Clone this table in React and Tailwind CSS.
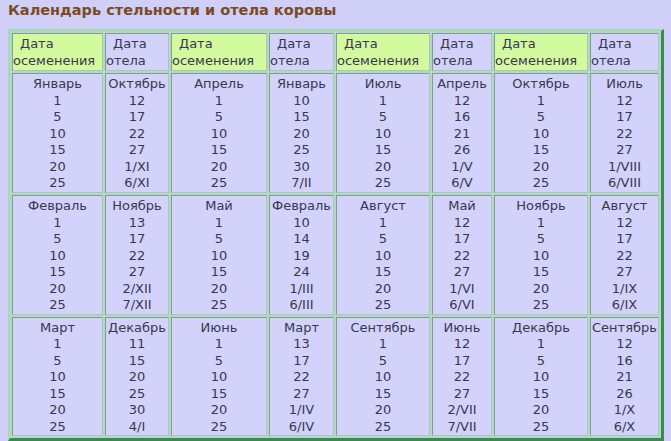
import React from "react";

const widths = ["w-[91px]", "w-[64px]", "w-[96px]", "w-[65px]", "w-[94px]", "w-[60px]", "w-[94px]", "w-[69px]"];

const rows = [
  {
    h: "h-[120px]",
    cols: [
      ["Январь", "1", "5", "10", "15", "20", "25"],
      ["Октябрь", "12", "17", "22", "27", "1/XI", "6/XI"],
      ["Апрель", "1", "5", "10", "15", "20", "25"],
      ["Январь", "10", "15", "20", "25", "30", "7/II"],
      ["Июль", "1", "5", "10", "15", "20", "25"],
      ["Апрель", "12", "16", "21", "26", "1/V", "6/V"],
      ["Октябрь", "1", "5", "10", "15", "20", "25"],
      ["Июль", "12", "17", "22", "27", "1/VIII", "6/VIII"],
    ],
  },
  {
    h: "h-[118px]",
    cols: [
      ["Февраль", "1", "5", "10", "15", "20", "25"],
      ["Ноябрь", "13", "17", "22", "27", "2/XII", "7/XII"],
      ["Май", "1", "5", "10", "15", "20", "25"],
      ["Февраль", "10", "14", "19", "24", "1/III", "6/III"],
      ["Август", "1", "5", "10", "15", "20", "25"],
      ["Май", "12", "17", "22", "27", "1/VI", "6/VI"],
      ["Ноябрь", "1", "5", "10", "15", "20", "25"],
      ["Август", "12", "17", "22", "27", "1/IX", "6/IX"],
    ],
  },
  {
    h: "h-[119px]",
    cols: [
      ["Март", "1", "5", "10", "15", "20", "25"],
      ["Декабрь", "11", "15", "20", "25", "30", "4/I"],
      ["Июнь", "1", "5", "10", "15", "20", "25"],
      ["Март", "13", "17", "22", "27", "1/IV", "6/IV"],
      ["Сентябрь", "1", "5", "10", "15", "20", "25"],
      ["Июнь", "12", "17", "22", "27", "2/VII", "7/VII"],
      ["Декабрь", "1", "5", "10", "15", "20", "25"],
      ["Сентябрь", "12", "16", "21", "26", "1/X", "6/X"],
    ],
  },
];

const cellBorder = "border border-t-[#7f9c96] border-l-[#7f9c96] border-r-[#a9c8bc] border-b-[#a9c8bc]";

export default function App() {
  return (
    <div className="w-[671px] h-[441px] overflow-hidden bg-[#cfcff7] font-['DejaVu_Sans',Verdana,sans-serif] text-[#38384f]">
      <div className="pl-[8px] pt-[1px] h-[29px] text-[14.5px] font-bold leading-[18px] text-[#7c4a22]">
        Календарь стельности и отела коровы
      </div>
      <table className="ml-[8px] w-[656px] table-fixed border-separate border-spacing-[2px] bg-[#b4d8c4] border-t-2 border-l-2 border-r-[3px] border-b-[3px] border-t-[#a4dab6] border-l-[#a4dab6] border-r-[#3b8a52] border-b-[#3b8a52] text-[13px]">
        <thead>
          <tr className="h-[38px]">
            {widths.map((w, i) => (
              <th
                key={i}
                className={`${w} ${cellBorder} ${i % 2 === 0 ? "bg-[#d3fa9e]" : "bg-[#d2d2fb]"} p-0 pt-[1px] text-left align-middle font-normal leading-[16.5px]`}
              >
                <div className="pl-[7px]">Дата</div>
                <div className="whitespace-nowrap">{i % 2 === 0 ? "осеменения" : "отела"}</div>
              </th>
            ))}
          </tr>
        </thead>
        <tbody>
          {rows.map((row, r) => (
            <tr key={r} className={row.h}>
              {row.cols.map((col, c) => (
                <td key={c} className={`${cellBorder} bg-[#d2d2fb] p-0 pt-[2px] text-center align-top leading-[16.5px]`}>
                  {col.map((v, k) => (
                    <div key={k} className="whitespace-nowrap">{v}</div>
                  ))}
                </td>
              ))}
            </tr>
          ))}
        </tbody>
      </table>
    </div>
  );
}
